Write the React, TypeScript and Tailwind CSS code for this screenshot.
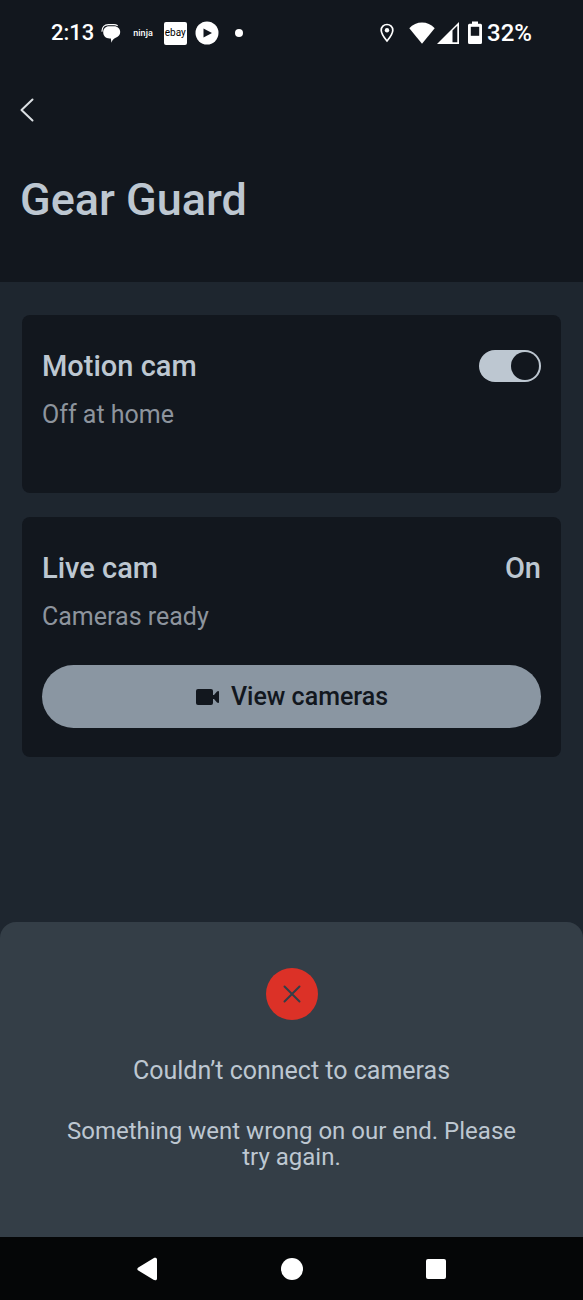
import React from "react";

const navItems = [
	{
		label: "Back",
		icon: (
			<path d="M17.5 1.2 2.3 10.4a1.8 1.8 0 0 0 0 3.2l15.2 9.2c1.7 1 3.5.4 3.5-1.4V2.6C21 .8 19.2.2 17.5 1.2Z" />
		),
	},
	{ label: "Home", icon: <circle cx="12" cy="12" r="11" /> },
	{
		label: "Overview",
		icon: <rect x="2" y="2" width="20" height="20" rx="2" />,
	},
];

function StatusBar() {
	return (
		<div className="flex h-[66px] items-center justify-between px-[51px] text-white">
			<div className="flex items-center">
				<span className="text-[22px] leading-6 font-medium">2:13</span>
				<svg viewBox="0 0 20 20" className="ml-[7px] h-5 w-5" fill="currentColor">
					<path d="M8 3.2h5c3.700 0 6.200 2.500 6.200 5.800 0 2.800-1.700 4.900-4.500 5.700-1.900.6-3.300 2.200-4.200 5L9.800 15.500H8.500C4.800 15.300 2.200 12.700 2.200 9.200S4.700 3.200 8 3.200Z" />
					<path
						d="M1 8.200C1 4.300 3.500 1.600 7.300 1.600H13c1.400 0 2.400.3 3.300.9"
						fill="none"
						stroke="currentColor"
						strokeWidth="1.200"
						strokeLinecap="round"
					/>
				</svg>
				<span className="ml-3 text-[9px] leading-3 font-medium">ninja</span>
				<span className="ml-[11px] flex h-[23px] w-[23px] items-center justify-center rounded-xs bg-white text-[10px] leading-3 text-black">
					ebay
				</span>
				<svg viewBox="0 0 24 24" className="ml-2 h-6 w-6">
					<circle cx="12" cy="12" r="11.500" fill="white" />
					<path d="M8.500 7.500v9l8.500-4.500Z" fill="#12171e" />
				</svg>
				<span className="ml-4 h-2 w-2 rounded-full bg-white" />
			</div>
			<div className="flex items-center">
				<svg viewBox="0 0 16 20" className="h-5 w-4" fill="none">
					<path
						d="M8 1.500c-3.300 0-5.800 2.500-5.800 5.700C2.200 11 8 18 8 18s5.800-7 5.800-10.800c0-3.200-2.500-5.700-5.800-5.700Z"
						stroke="white"
						strokeWidth="1.700"
					/>
					<circle cx="8" cy="7.200" r="2.200" fill="white" />
				</svg>
				<svg viewBox="0 0 26 22" className="ml-[14px] h-[22px] w-[26px]" fill="white">
					<path d="M.3 6.200C6.800-1.300 19.200-1.300 25.700 6.200L13 21.700Z" />
				</svg>
				<svg viewBox="0 0 22 22" className="ml-[2px] h-[22px] w-[22px]">
					<path d="M22 0v22H0Z" fill="white" />
					<path d="M15.500 8.500 20.300 3.700v16.600h-4.800Z" fill="#12171e" />
				</svg>
				<svg viewBox="0 0 16 24" className="ml-2 h-6 w-4">
					<path
						d="M5 .5h6v2.300h2.500A1.500 1.500 0 0 1 15 4.300v17.200a1.500 1.500 0 0 1-1.500 1.500h-11A1.500 1.500 0 0 1 1 21.500V4.300a1.500 1.500 0 0 1 1.500-1.500H5Z"
						fill="white"
					/>
					<path d="M3.800 5.800h8.400v9H3.800Z" fill="#12171e" />
				</svg>
				<span className="ml-1 text-[24px] leading-6 font-medium">32%</span>
			</div>
		</div>
	);
}

export default function GearGuard() {
	return (
		<div className="flex min-h-screen flex-col bg-[#1e262f] font-[Roboto,sans-serif] text-[#bdc7d1]">
			<header className="h-[282px] bg-[#12171e]">
				<StatusBar />
				<div className="px-5 pt-8">
					<button type="button" aria-label="Go back" className="block h-6">
						<svg
							viewBox="0 0 14 24"
							className="h-6 w-[14px]"
							fill="none"
							stroke="#dce0e4"
							strokeWidth="2"
							strokeLinecap="round"
							strokeLinejoin="round"
						>
							<path d="M12.500 1.500 1.500 12l11 10.500" />
						</svg>
					</button>
					<h1 className="mt-[50px] text-[45px] leading-14 font-medium">
						Gear Guard
					</h1>
				</div>
			</header>

			<main className="flex flex-1 flex-col gap-6 px-[22px] pt-[33px]">
				<section className="h-[178px] rounded-lg bg-[#12171e] px-5 pt-[31px]">
					<div className="flex items-center justify-between">
						<h2 className="text-[29px] leading-10 font-medium">
							<label htmlFor="motion-cam">Motion cam</label>
						</h2>
						<input
							id="motion-cam"
							type="checkbox"
							role="switch"
							defaultChecked
							className="flex h-8 w-[62px] appearance-none items-center rounded-full bg-[#616b76] px-[2px] before:size-7 before:rounded-full before:bg-[#12171e] checked:justify-end checked:bg-[#bdc7d1]"
						/>
					</div>
					<p className="mt-[13px] text-[25px] leading-8 text-[#8d949d]">
						Off at home
					</p>
				</section>

				<section className="h-[240px] rounded-lg bg-[#12171e] px-5 pt-[31px]">
					<div className="flex items-center justify-between">
						<h2 className="text-[29px] leading-10 font-medium">Live cam</h2>
						<span className="text-[29px] leading-10 font-medium">On</span>
					</div>
					<p className="mt-[13px] text-[25px] leading-8 text-[#8d949d]">
						Cameras ready
					</p>
					<button
						type="button"
						className="mt-8 flex h-[63px] w-full items-center justify-center gap-3 rounded-full bg-[#8a96a2] text-[25px] leading-8 font-medium text-[#12171e]"
					>
						<svg viewBox="0 0 24 18" className="h-[18px] w-6" fill="currentColor">
							<rect x="1" y="1" width="17" height="16" rx="2" />
							<path d="M17 7 19 7 22 3.500Q24 2.500 24 4v10q0 1.500-2 .5L19 11h-2Z" />
						</svg>
						View cameras
					</button>
				</section>
			</main>

			<section
				role="alert"
				className="flex h-[315px] flex-col items-center rounded-t-2xl bg-[#343e47] px-16 pt-[46px] text-center"
			>
				<div className="flex size-[52px] items-center justify-center rounded-full bg-[#dc3127]">
					<svg
						viewBox="0 0 18 18"
						className="size-[18px]"
						stroke="#343e47"
						strokeWidth="2"
						strokeLinecap="round"
					>
						<path d="m1.500 1.500 15 15m0-15-15 15" />
					</svg>
				</div>
				<h2 className="mt-[35px] text-[25px] leading-8">
					Couldn’t connect to cameras
				</h2>
				<p className="mt-[31px] text-[24px] leading-[26px]">
					Something went wrong on our end. Please try again.
				</p>
			</section>

			<nav className="flex h-[63px] items-center justify-center gap-[120px] bg-[#050607] text-white">
				{navItems.map((item) => (
					<button key={item.label} type="button" aria-label={item.label}>
						<svg viewBox="0 0 24 24" className="size-6" fill="currentColor">
							{item.icon}
						</svg>
					</button>
				))}
			</nav>
		</div>
	);
}
